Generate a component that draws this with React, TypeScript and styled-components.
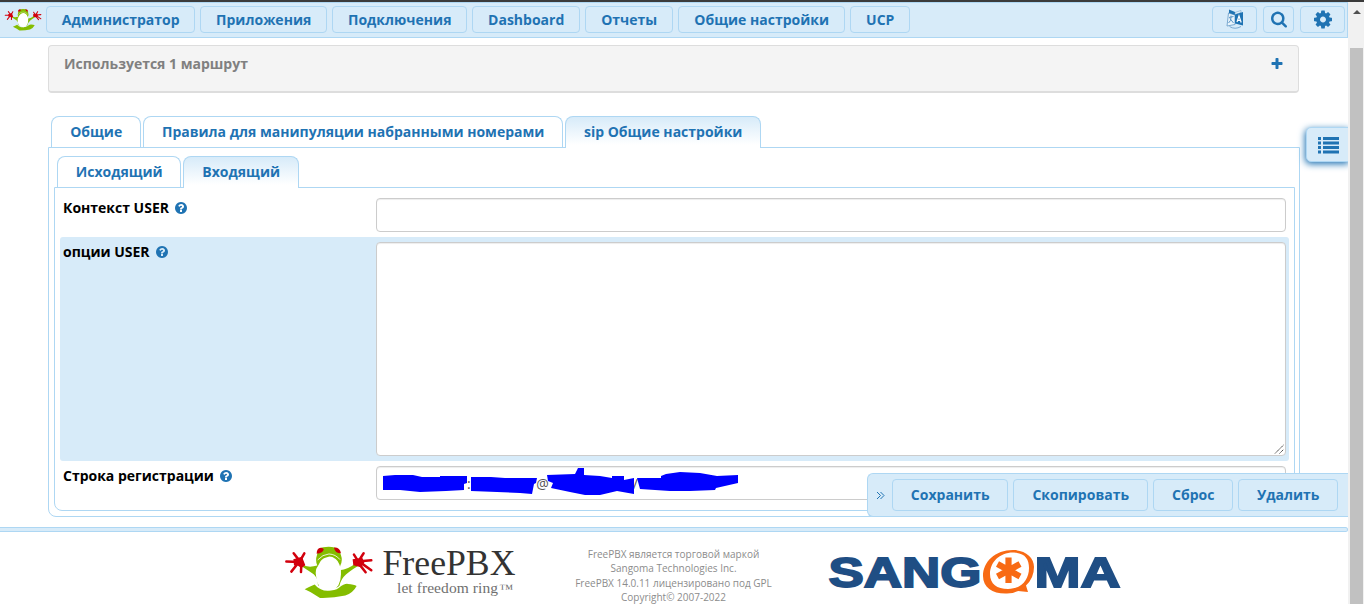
import React from "react";
import styled, { createGlobalStyle } from "styled-components";

const Global = createGlobalStyle`
  *{box-sizing:border-box}
  html,body{margin:0;padding:0;overflow:hidden;background:#fff}
  body{font-family:"Open Sans",sans-serif;font-size:14px;color:#000}
`;
const BLUE = "#1f73b3";
const PALE = "#d7ebf9";
const LINE = "#aed7f3";

const Screen = styled.div`position:relative;width:1364px;height:604px;overflow:hidden;border-top:2px solid #3b3b3b;display:flex;`;
const Page = styled.div`position:relative;width:1348px;height:602px;display:flex;flex-direction:column;overflow:hidden;`;
const Scrollbar = styled.div`width:16px;background:#f1f1f1;display:flex;flex-direction:column;align-items:center;`;
const ScrollArrow = styled.div`height:46px;padding-top:7px;margin-left:1px;line-height:0;`;
const Thumb = styled.div`width:13px;margin-left:1px;flex:1;background:#c1c1c1;`;

const Nav = styled.nav`height:36px;flex:none;display:flex;align-items:center;gap:5px;background:${PALE};border:1px solid ${LINE};border-left:0;padding:0 2px 2px 4px;`;
const Brand = styled.div`width:37px;height:28px;padding-top:3px;line-height:0;`;
const Button = styled.button<{ $w: number; $h?: number }>`
  width:${p => p.$w}px;height:${p => p.$h ?? 27}px;flex:none;padding:0 0 ${p => (p.$h ? 2 : 0)}px 0.4px;display:flex;align-items:center;justify-content:center;
  background:${PALE};border:1px solid ${LINE};border-radius:4px;color:${BLUE};
  font:700 14px/19px "Open Sans",sans-serif;white-space:nowrap;
`;
const Tools = styled.div`margin-left:auto;display:flex;gap:6px;`;

const Notice = styled.section`margin:7px 49px 0 48px;height:48px;flex:none;display:flex;justify-content:space-between;padding:8px 15px 0;
  background:#f4f4f4;border:1px solid #ddd;border-bottom-width:2px;border-radius:4px;color:#808080;font-weight:700;line-height:19px;`;
const NoticeIcon = styled.span`line-height:0;padding-top:3px;`;

const Tabs = styled.div`display:flex;gap:2px;position:relative;z-index:1;margin-bottom:-1px;padding-left:3px;`;
const Tab = styled.div<{ $w: number; $on?: boolean }>`
  width:${p => p.$w}px;height:${p => (p.$on ? 32 : 31)}px;display:flex;justify-content:center;padding:5px 0 0 0.4px;line-height:20px;
  border:1px solid ${LINE};border-bottom:0;border-radius:8px 8px 0 0;color:${BLUE};font-weight:700;white-space:nowrap;
  background:${p => (p.$on ? `linear-gradient(${PALE},#fff 90%)` : "#fff")};
`;
const Outer = styled.main`margin:23px 48px 0;flex:none;`;
const OuterPanel = styled.div`height:370px;border:1px solid ${LINE};border-radius:0 0 8px 8px;padding:8px 4px 0 5px;`;
const InnerPanel = styled.div`height:324px;border:1px solid ${LINE};border-radius:0 0 8px 8px;padding:5px 5px 0;`;

const Row = styled.div<{ $on?: boolean }>`display:grid;grid-template-columns:313px 910px;padding:5px 3px;border-radius:3px;background:${p => (p.$on ? PALE : "transparent")};`;
const Label = styled.label`display:flex;gap:6px;height:20px;line-height:19px;font-weight:700;white-space:nowrap;svg{display:block;margin-top:3px}`;
const Field = styled.div`height:34px;border:1px solid #ccc;border-radius:4px;background:#fff;box-shadow:inset 0 1px 1px rgba(0,0,0,.075);position:relative;
  padding:7px 6px;line-height:19px;color:#555;`;
const Area = styled(Field)`height:214px;`;
const Grip = styled.svg`position:absolute;right:1px;bottom:1px;`;
const Scribble = styled.svg`position:absolute;left:0;top:-1px;`;
const Credentials = styled.span`display:flex;`;
const Mark = styled.span<{ $gap: number }>`margin-left:${p => p.$gap}px;`;

const Actions = styled.div`position:absolute;right:0;top:471px;width:481px;height:44px;display:flex;align-items:center;gap:5px;
  background:${PALE};border:1px solid ${LINE};border-right:0;border-radius:6px 0 0 6px;`;
const Collapse = styled.span`width:19px;padding-left:7.5px;color:${BLUE};line-height:0;`;
const SideTab = styled.div`position:absolute;left:1306px;top:125px;width:44px;height:35px;background:${PALE};border:1px solid ${LINE};border-radius:5px 0 0 5px;
  box-shadow:-1px 2px 7px ${BLUE};padding:9px 0 0 11px;line-height:0;`;

const Footer = styled.footer`margin-top:10px;`;
const Strip = styled.div`height:5px;background:${PALE};border:1px solid ${LINE};border-left:0;border-radius:0 3px 3px 0;`;
const FootRow = styled.div`display:flex;padding-left:283px;height:72px;`;
const Logo = styled.div`width:240px;padding-top:12px;line-height:0;`;
const Legal = styled.p`margin:0;width:301px;padding-top:15px;text-align:center;font-size:10px;line-height:14.3px;color:#8c8c8c;`;
const Sangoma = styled.div`padding:16px 0 0 3px;line-height:0;`;

const Glyph = ({ d, vb, w, h }: { d: string; vb: number; w: number; h: number }) => (
  <svg width={w} height={h} viewBox={`0 0 ${vb} 1792`} fill={BLUE}><path d={d} /></svg>
);
const COG = "M1024 896q0-106-75-181t-181-75-181 75-75 181 75 181 181 75 181-75 75-181zm512-109v222q0 12-8 23t-20 13l-185 28q-19 54-39 91 35 50 107 138 10 12 10 25t-9 23q-27 37-99 108t-94 71q-12 0-26-9l-138-108q-44 23-91 38-16 136-29 186-7 28-36 28h-222q-14 0-24.500-8.500t-11.500-21.500l-28-184q-49-16-90-37l-141 107q-10 9-25 9-14 0-25-11-126-114-165-168-7-10-7-23 0-12 8-23 15-21 51-66.500t54-70.500q-27-50-41-99l-183-27q-13-2-21-12.500t-8-23.500v-222q0-12 8-23t19-13l186-28q14-46 39-92-40-57-107-138-10-12-10-24 0-10 9-23 26-36 98.500-107.500t94.500-71.500q13 0 26 10l138 107q44-23 91-38 16-136 29-186 7-28 36-28h222q14 0 24.500 8.500t11.500 21.500l28 184q49 16 90 37l142-107q9-9 24-9 13 0 25 10 129 119 165 170 7 8 7 22 0 12-8 23-15 21-51 66.500t-54 70.500q26 50 41 98l183 28q13 2 21 12.500t8 23.500z";
const SEARCH = "M1152 832q0-185-131.500-316.500t-316.500-131.500-316.500 131.500-131.500 316.500 131.500 316.500 316.500 131.500 316.500-131.500 131.500-316.500zm512 832q0 52-38 90t-90 38q-54 0-90-38l-343-342q-179 124-399 124-143 0-273.500-55.500t-225-150-150-225-55.500-273.500 55.500-273.500 150-225 225-150 273.500-55.500 273.500 55.500 225 150 150 225 55.500 273.500q0 220-124 399l343 343q37 37 37 90z";
const PLUS = "M1408 736v192q0 40-28 68t-68 28h-416v416q0 40-28 68t-68 28h-192q-40 0-68-28t-28-68v-416h-416q-40 0-68-28t-28-68v-192q0-40 28-68t68-28h416v-416q0-40 28-68t68-28h192q40 0 68 28t28 68v416h416q40 0 68 28t28 68z";
const HELP = "M896 1376v-192q0-14-9-23t-23-9h-192q-14 0-23 9t-9 23v192q0 14 9 23t23 9h192q14 0 23-9t9-23zm256-672q0-88-55.500-163t-138.500-116-170-41q-243 0-371 213-15 24 8 42l132 100q7 6 19 6 16 0 25-12 53-68 86-92 34-24 86-24 48 0 85.500 26t37.500 59q0 38-20 61t-68 45q-63 28-115.500 86.500t-52.500 125.500v36q0 14 9 23t23 9h192q14 0 23-9t9-23q0-19 21.500-49.500t54.500-49.500q32-18 49-28.500t46-35 44.500-48 28-60.500 12.500-81zm384 192q0 209-103 385.500t-279.500 279.500-385.500 103-385.500-103-279.500-279.500-103-385.500 103-385.500 279.500-279.500 385.500-103 385.500 103 279.500 279.500 103 385.500z";
const Help = () => <Glyph d={HELP} vb={1536} w={12} h={14} />;

const Frog = ({ w, h, x, y }: { w: number; h: number; x?: number; y?: number }) => (
  <svg x={x} y={y} width={w} height={h} viewBox="40 46 272 160">
    <path d="M104 178Q120 170 134 164Q146 178 162 182Q194 184 206 174Q224 160 234 162Q252 163 260 168Q250 188 226 197Q190 205 150 204L132 193Q124 187 104 178Z" fill="#84bd00" />
    <path d="M96 103Q112 115 142 107Q135 92 141 75Q146 53 160 52Q178 48 196 53Q209 56 213 76Q219 92 211 107L208 121Q236 118 257 100L264 108Q238 124 228 134Q213 147 208 168L201 173L144 167Q144 144 131 133Q116 123 96 110Z" fill="#84bd00" />
    <path d="M143 110Q135 120 138 136Q138 154 147 168Q160 182 180 181Q196 179 205 167Q213 151 213 133Q215 116 208 103Q204 92 197 87Q186 79 176 80Q160 83 152 93Z" fill="#fff" />
    <path d="M143 90Q158 73 177 72Q197 73 210 89" stroke="#fff" strokeWidth="2.500" fill="none" />
    <path d="M140 71Q140 54 152 53Q162 54 161 59Q158 69 140 71ZM192 53Q210 52 213 70Q195 70 192 53Z" fill="#c90009" />
    <g stroke="#d2000d" strokeWidth="7.500" strokeLinecap="round" strokeLinejoin="round" fill="none">
      <path d="M88 96L49 95M88 92L71 70M92 90L103 70M84 100L64 125M94 104L93 126M262 90L252 74M268 90L281 70M271 94L304 91M272 98L304 121M269 104L287 127" />
    </g>
    <path d="M70 88L96 80 106 106 94 114 82 106 72 107ZM248 88L277 83 283 98 273 112 250 106Z" fill="#d2000d" />
  </svg>
);

const FreePbxLogo = () => (
  <svg width="236" height="56" viewBox="0 0 236 56">
    <Frog w={90.7} h={53.3} x={0.3} y={1.3} />
    <text x="99.500" y="30.500" fontFamily="Liberation Serif" fontSize="36" fill="#333" textLength="133" lengthAdjust="spacingAndGlyphs">FreePBX</text>
    <text x="114" y="48.500" fontFamily="Liberation Serif" fontSize="15.500" fill="#707070" textLength="101" lengthAdjust="spacing">let freedom ring</text>
    <text x="216.500" y="48.500" fontFamily="Liberation Serif" fontSize="13" fill="#707070" textLength="14" lengthAdjust="spacingAndGlyphs">™</text>
  </svg>
);

const SangomaLogo = () => (
  <svg width="296" height="50" viewBox="0 0 296 50">
    <g fontFamily="Liberation Sans" fontWeight="700" fontSize="42" fill="#1f4e84" stroke="#1f4e84" strokeWidth="1.800">
      <text x="1.500" y="38.500" textLength="153" lengthAdjust="spacingAndGlyphs">SANG</text>
      <text x="207.500" y="38.500" textLength="86" lengthAdjust="spacingAndGlyphs">MA</text>
    </g>
    <path fillRule="evenodd" fill="#f86a14" d="M186 2C168 2 156 14 156 28C156 40 166 46 180 45.500Q186 45.500 191 43L201 44L199 37.500Q207 30 207 19C207 9 198 2 186 2ZM187 4.500C198 5 202 11 202 20C202 32 194 41 181 41C170 41 163 36 163 26C163 14 173 4 187 4.500Z" />
    <path d="M181.500 9.500V35M170.500 16L193 28.500M170.500 28.500L193 16" stroke="#f86a14" strokeWidth="6.200" />
  </svg>
);

const Translate = () => (
  <svg width="18" height="20" viewBox="0 0 18 20">
    <path d="M2.500 4L9 6V15.500L1 17Z" fill="#eaf4fb" stroke="#6fa2cc" strokeWidth=".9" />
    <path d="M3 .5L9 3V6L3 4Z" fill={BLUE} />
    <path d="M9 3.500L15 1.500V3.500L9 5.500Z" fill="#eaf4fb" stroke="#6fa2cc" strokeWidth=".6" />
    <path d="M9 5.500L17 3V16.500L9 14.500Z" fill={BLUE} />
    <path d="M11 13L13 7L15.200 13.500M11.500 11.300H14.500" stroke="#fff" strokeWidth="1.200" fill="none" />
    <path d="M3 8.500L7.500 7.500M5 6.500V8.500Q5 12 2.500 14M4 9.500L7.500 14" stroke="#4b8cc1" fill="none" strokeWidth=".9" />
    <path d="M3.500 17.500Q9 21 15 17.500" stroke="#6fa2cc" fill="none" strokeWidth=".9" />
  </svg>
);

const menu: [string, number][] = [["Администратор", 149], ["Приложения", 127], ["Подключения", 135], ["Dashboard", 108], ["Отчеты", 88], ["Общие настройки", 167], ["UCP", 60]];
const actions: [string, number][] = [["Сохранить", 116], ["Скопировать", 135], ["Сброс", 80], ["Удалить", 100]];

export default function App() {
  return (
    <Screen>
      <Global />
      <Page>
        <Nav>
          <Brand><Frog w={38} h={23} /></Brand>
          {menu.map(([t, w]) => <Button key={t} $w={w}>{t}</Button>)}
          <Tools>
            <Button $w={45}><Translate /></Button>
            <Button $w={31}><Glyph d={SEARCH} vb={1664} w={16} h={18} /></Button>
            <Button $w={45}><Glyph d={COG} vb={1536} w={18} h={21} /></Button>
          </Tools>
        </Nav>
        <Notice>Используется 1 маршрут<NoticeIcon><Glyph d={PLUS} vb={1408} w={12} h={14} /></NoticeIcon></Notice>
        <Outer>
          <Tabs>
            <Tab $w={90}>Общие</Tab>
            <Tab $w={420}>Правила для манипуляции набранными номерами</Tab>
            <Tab $w={196} $on>sip Общие настройки</Tab>
          </Tabs>
          <OuterPanel>
            <Tabs>
              <Tab $w={124}>Исходящий</Tab>
              <Tab $w={116} $on>Входящий</Tab>
            </Tabs>
            <InnerPanel>
              <Row><Label>Контекст USER <Help /></Label><Field /></Row>
              <Row $on>
                <Label>опции USER <Help /></Label>
                <Area><Grip width="10" height="10" viewBox="0 0 10 10"><path d="M1 9.500L9.500 1M5.500 9.500L9.500 5.500" stroke="#444" strokeDasharray="1.400 .4" /></Grip></Area>
              </Row>
              <Row>
                <Label>Строка регистрации <Help /></Label>
                <Field>
                  <Credentials><Mark $gap={84}>:</Mark><Mark $gap={65.500}>@</Mark><Mark $gap={84}>/</Mark></Credentials>
                  <Scribble width="370" height="34" viewBox="377 466 370 34">
                    <path fill="#00f" d="M383 476L395 475 413 475 422 477 440 477 440 476 467 476 467 483 464 484 464 490 446 491 420 492 400 490 383 490ZM471 477L491 477 505 478 537 478 536 483 534 484 532 494 520 493 471 491ZM547 475L575 474 578 468 584 468 584 475 600 476 612 478 612 476 624 476 624 480 634 478 634 494 617 491 600 495 585 495 570 492 551 488 553 483 548 481ZM637 478L661 478 661 476 666 474 680 472 700 473 717 476 738 475 738 483 716 488 715 490 690 491 670 491 640 489Z" />
                  </Scribble>
                </Field>
              </Row>
            </InnerPanel>
          </OuterPanel>
        </Outer>
        <Footer>
          <Strip />
          <FootRow>
            <Logo><FreePbxLogo /></Logo>
            <Legal>FreePBX является торговой маркой<br />Sangoma Technologies Inc.<br />FreePBX 14.0.11 лицензировано под GPL<br />Copyright© 2007-2022</Legal>
            <Sangoma><SangomaLogo /></Sangoma>
          </FootRow>
        </Footer>
        <SideTab>
          <svg width="21" height="17" viewBox="0 0 21 17" fill={BLUE}>
            {[0, 4.500, 9, 13.500].map(y => <g key={y}><rect y={y} width="3" height="3" /><rect x="5" y={y} width="16" height="3" /></g>)}
          </svg>
        </SideTab>
        <Actions>
          <Collapse><svg width="9" height="9" viewBox="0 0 9 9"><path d="M1 1L4.500 4.500 1 8M4.500 1L8 4.500 4.500 8" stroke={BLUE} fill="none" /></svg></Collapse>
          {actions.map(([t, w]) => <Button key={t} $w={w} $h={32}>{t}</Button>)}
        </Actions>
      </Page>
      <Scrollbar>
        <ScrollArrow><svg width="8" height="4"><path d="M0 4L4 0 8 4Z" fill="#505050" /></svg></ScrollArrow>
        <Thumb />
      </Scrollbar>
    </Screen>
  );
}
